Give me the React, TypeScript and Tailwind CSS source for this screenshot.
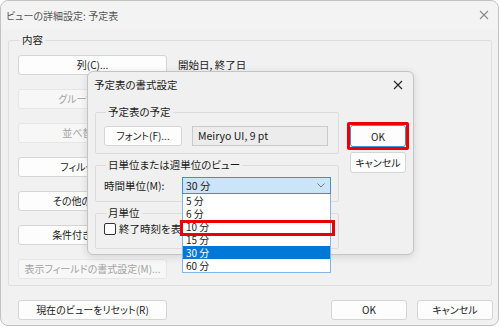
import React from "react";

const font = "font-['Noto_Sans_CJK_JP','Noto_Sans',sans-serif] [font-feature-settings:'palt']";

const Btn: React.FC<{ label: string; disabled?: boolean; className?: string }> = ({ label, disabled, className = "" }) => (
  <div
    className={`flex items-center justify-center rounded-[3px] border text-[10px] leading-none whitespace-nowrap ${
      disabled ? "border-[#e6e6e6] bg-[#f7f7f7] text-[#a3a3a3]" : "border-[#d5d5d5] bg-[#fdfdfd] text-[#1b1b1b]"
    } ${className}`}
  >
    {label}
  </div>
);

const CloseX: React.FC<{ color: string }> = ({ color }) => (
  <svg width="10" height="10" viewBox="0 0 10 10">
    <path d="M1 1L9 9M9 1L1 9" stroke={color} strokeWidth="1.1" />
  </svg>
);

const options = ["5 分", "6 分", "10 分", "15 分", "30 分", "60 分"];

export default function App() {
  return (
    <div className={`w-[500px] h-[327px] bg-white ${font}`}>
      <div className="relative w-[499px] h-[326px] rounded-lg border border-[#c2c2c2] bg-[#f1f1f1] text-[#1b1b1b]">
        {/* title bar */}
        <div className="h-[28px] flex items-center justify-between pl-[5px] pr-[9px] rounded-t-lg bg-[#f3f3f3]">
          <span className="text-[10px] text-[#555]">ビューの詳細設定: 予定表</span>
          <CloseX color="#8a8a8a" />
        </div>

        {/* 内容 group */}
        <fieldset className="ml-[7px] mt-[4px] w-[484px] border border-[#dedede] rounded-[2px] pl-[9px] pb-[6px] pt-[8px]">
          <legend className="ml-[2px] px-[2px] text-[10.5px] leading-[14px]">内容</legend>
          <div className="flex flex-col gap-[14px]">
            <div className="flex items-center gap-[11px]">
              <Btn label="列(C)..." className="w-[149px] h-[20px]" />
              <span className="text-[10.5px]">開始日, 終了日</span>
            </div>
            <Btn label="グループ化(G)..." disabled className="w-[149px] h-[20px]" />
            <Btn label="並べ替え(S)..." disabled className="w-[149px] h-[20px]" />
            <Btn label="フィルター(L)..." className="w-[149px] h-[20px]" />
            <Btn label="その他の設定(T)..." className="w-[149px] h-[20px]" />
            <Btn label="条件付き書式(D)..." className="w-[149px] h-[20px]" />
            <Btn label="表示フィールドの書式設定(M)..." disabled className="w-[149px] h-[20px]" />
          </div>
        </fieldset>

        {/* bottom buttons */}
        <div className="mt-[14px] ml-[17px] flex items-center">
          <Btn label="現在のビューをリセット(R)" className="w-[149px] h-[20px]" />
          <Btn label="OK" className="ml-[164px] w-[76px] h-[20px]" />
          <Btn label="キャンセル" className="ml-[10px] w-[76px] h-[20px]" />
        </div>

        {/* 予定表の書式設定 dialog */}
        <div className="absolute left-[86px] top-[70px] w-[327px] h-[184px] rounded-md border border-[#c4c4c4] bg-[#f0f0f0] shadow-[0_2px_8px_rgba(0,0,0,0.12)]">
          <div className="h-[26px] flex items-center justify-between pl-[6px] pr-[10px]">
            <span className="text-[10.5px] text-[#1b1b1b]">予定表の書式設定</span>
            <CloseX color="#222" />
          </div>

          <div className="flex items-start pl-[7px] pr-[4px]">
            <div className="w-[245px] flex flex-col gap-[4px] mt-[7px]">
              <fieldset className="border border-[#dcdcdc] rounded-[2px] pl-[8px] pt-[7px] pb-[7px]">
                <legend className="ml-[2px] px-[2px] text-[10.5px] leading-[14px]">予定表の予定</legend>
                <div className="flex items-center gap-[10px]">
                  <Btn label="フォント(F)..." className="w-[78px] h-[20px]" />
                  <div className="w-[136px] h-[20px] flex items-center pl-[5px] border border-[#c9c9c9] bg-[#ececec] text-[10.5px]">
                    Meiryo UI, 9 pt
                  </div>
                </div>
              </fieldset>

              <fieldset className="border border-[#dcdcdc] rounded-[2px] pl-[8px] pt-[5px] pb-[7px]">
                <legend className="ml-[2px] px-[2px] text-[10.5px] leading-[14px]">日単位または週単位のビュー</legend>
                <div className="flex items-center">
                  <span className="w-[78px] text-[10.5px] leading-[14px]">時間単位(M):</span>
                  <div className="relative z-10">
                    <div className="w-[149px] h-[17px] flex items-center justify-between pl-[3px] pr-[5px] border border-[#3d8fdc] bg-[#cce4f7] text-[10.5px] leading-[13px]">
                      <span>30 分</span>
                      <svg width="8" height="5" viewBox="0 0 8 5">
                        <path d="M0.5 0.5L4 4L7.5 0.5" stroke="#777" fill="none" strokeWidth="1" />
                      </svg>
                    </div>
                    <div className="absolute left-0 top-full w-[149px] border border-[#7fb6ea] border-t-0 bg-white text-[10px]">
                      {options.map((o) => (
                        <div
                          key={o}
                          className={`h-[13px] leading-[13px] pl-[3px] ${o === "30 分" ? "bg-[#0078d7] text-white" : ""}`}
                        >
                          {o}
                        </div>
                      ))}
                      <div className="absolute left-[-3px] top-[26px] w-[155px] h-[16px] border-[3px] border-[#ea0000]" />
                    </div>
                  </div>
                </div>
              </fieldset>

              <fieldset className="border border-[#dcdcdc] rounded-[2px] pl-[8px] pt-[2px] pb-[12px]">
                <legend className="ml-[2px] px-[2px] text-[10.5px] leading-[14px]">月単位</legend>
                <div className="flex items-center gap-[3px]">
                  <div className="w-[12px] h-[12px] rounded-[2px] border border-[#333] bg-white" />
                  <span className="text-[10.5px] leading-[14px]">終了時刻を表示</span>
                </div>
              </fieldset>
            </div>

            <div className="ml-[8px] mt-[24px] flex flex-col items-center gap-[2px]">
              <div className="border-[3px] border-[#ea0000] rounded-[2px]">
                <div className="w-[56px] h-[22px] flex items-center justify-center rounded-[3px] border border-[#3d8fdc] bg-[#fdfdfd] text-[10px]">
                  OK
                </div>
              </div>
              <Btn label="キャンセル" className="w-[56px] h-[21px]" />
            </div>
          </div>
        </div>
      </div>
    </div>
  );
}
